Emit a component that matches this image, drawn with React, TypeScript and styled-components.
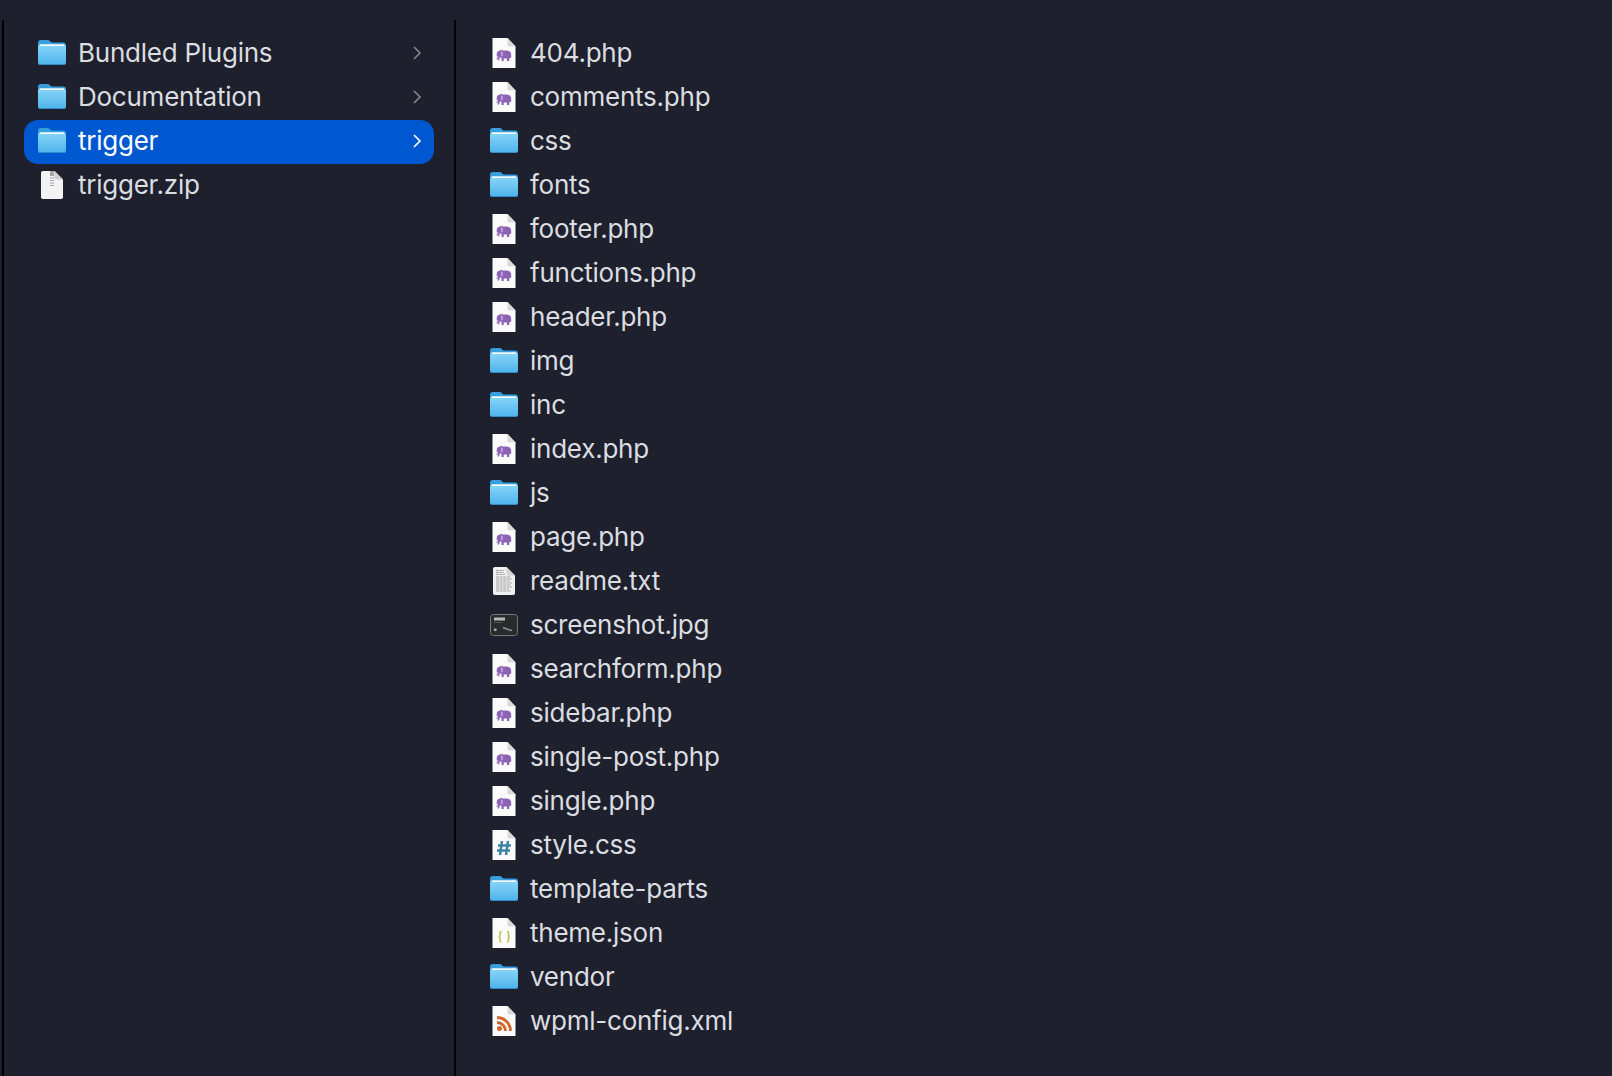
import React from "react";
import styled, { createGlobalStyle } from "styled-components";

const Global = createGlobalStyle`
  html, body { margin: 0; padding: 0; height: 100%; background: #1e212d; }
  #root { height: 100%; }
  body { font-family: Inter, "Liberation Sans", sans-serif; -webkit-font-smoothing: antialiased; }
`;

const Window = styled.div`
  height: 1076px;
  box-sizing: border-box;
  padding: 20px 0 0 2px;
  display: flex;
  background: #1e212d;
  overflow: hidden;
`;
const Sidebar = styled.nav`
  width: 450px;
  box-sizing: content-box;
  border-left: 2px solid #000;
  border-right: 2px solid #000;
  padding-top: 12px;
  display: flex;
  flex-direction: column;
`;
const Content = styled.main`
  flex: 1;
  padding: 12px 0 0 34px;
  display: flex;
  flex-direction: column;
`;
const Row = styled.div<{ $selected?: boolean }>`
  height: 44px;
  flex: none;
  display: flex;
  align-items: center;
  border-radius: 14px;
  background: ${(p) => (p.$selected ? "#0058d0" : "transparent")};
`;
const SideRow = styled(Row)`
  margin-left: 20px;
  width: 410px;
  padding-left: 14px;
  padding-right: 12px;
  box-sizing: border-box;
`;
const IconSlot = styled.span`
  width: 28px;
  height: 30px;
  flex: none;
  margin-top: -3px;
  display: flex;
  align-items: center;
  justify-content: center;
`;
const Label = styled.span<{ $selected?: boolean }>`
  margin-left: 12px;
  font-size: 26px;
  line-height: 44px;
  margin-top: -3px;
  letter-spacing: -0.24px;
  white-space: nowrap;
  color: ${(p) => (p.$selected ? "#ffffff" : "#dcdde0")};
  flex: 1;
`;
const Chevron = styled.svg`
  width: 10px;
  height: 14px;
  flex: none;
  margin-top: -3px;
`;

const Folder = () => (
  <svg width="28" height="25" viewBox="0 0 28 25">
    <defs>
      <linearGradient id="fg" x1="0" y1="0" x2="0" y2="1">
        <stop offset="0" stopColor="#86d5f8" />
        <stop offset="1" stopColor="#4fb3ea" />
      </linearGradient>
    </defs>
    <path d="M0 3C0 1 1 0 3 0H9.500C11 0 11.500 .8 12.500 1.800C13 2.300 13.500 2.500 14.500 2.500H25C27 2.500 28 3.500 28 5.500V22C28 24 27 25 25 25H3C1 25 0 24 0 22Z" fill="#389fdf" />
    <path d="M0 7C0 6 .8 5 2.500 5H25.500C27.200 5 28 6 28 7V22C28 24 27 25 25 25H3C1 25 0 24 0 22Z" fill="url(#fg)" />
    <rect x="1.500" y="4.300" width="25" height="1.700" rx=".8" fill="#f4fbff" />
    <path d="M.5 23.500C1 24.300 2 24.600 3 24.600H25C26 24.600 27 24.300 27.500 23.500" stroke="#2f8cc6" fill="none" />
  </svg>
);

const Page = ({ children }: { children?: React.ReactNode }) => (
  <svg width="24" height="30" viewBox="0 0 24 30">
    <path d="M0.500 0H15.500L23.500 8.500V30H0.500Z" fill="#fbfbfb" />
    <path d="M15.500 0V6.500C15.500 7.700 16.300 8.500 17.500 8.500H23.500Z" fill="#d9d9dc" />
    {children}
  </svg>
);

const Php = () => (
  <Page>
    <g fill="#8d63b8" transform="translate(0 -0.8)">
      <path d="M4.800 18.500C4.300 15.800 5.400 13.500 7.800 13.300C9 12.300 11 12.600 11.600 13.500C13 13 16.800 13 18.200 14.600C19.500 16 19.300 18.500 19 20.700H17.300V23.800H15V21.200H11.700V23.800H9.500V20.500C8.700 20.700 8.300 20.200 8 19.700L7.400 21.700L7 23.300H5.800L6.200 20Z" />
      <rect x="4.600" y="20" width="1" height="2" />
    </g>
    <path d="M9.700 13.700C10.200 15.400 10.200 16.900 9.700 18.200" stroke="#fbfbfb" strokeWidth=".8" fill="none" />
  </Page>
);

const Zip = () => (
  <svg width="22" height="28" viewBox="0 0 22 28">
    <path d="M2 0H13.500L22 8.500V26C22 27.300 21.300 28 20 28H2C.7 28 0 27.300 0 26V2C0 .7 .7 0 2 0Z" fill="#f3f3f4" />
    <path d="M13.500 0V6.500C13.500 7.700 14.300 8.500 15.500 8.500H22Z" fill="#cfcfd2" />
    <rect x="9" y="0" width="4" height="5" fill="#a8a8ac" />
    <path d="M9 7H13M9 9.500H13M9 12H13M9 14.500H13" stroke="#a8a8ac" strokeWidth="1.200" />
  </svg>
);

const Txt = () => (
  <svg width="22" height="28" viewBox="0 0 22 28">
    <path d="M2 0H13.500L22 8.500V26C22 27.300 21.300 28 20 28H2C.7 28 0 27.300 0 26V2C0 .7 .7 0 2 0Z" fill="#f0f0f0" />
    <path d="M13.500 0V6.500C13.500 7.700 14.300 8.500 15.500 8.500H22Z" fill="#d2d2d4" />
    <path d="M3 3.500H11M3 5.500H11M3 7.500H12M3 10H18M3 12H19M3 14H17M3 16H19M3 18H18M3 20H19M3 22H16M3 24H18" stroke="#a3a3a6" strokeWidth="1.100" strokeDasharray="3 .6" />
  </svg>
);

const Jpg = () => (
  <svg width="28" height="22" viewBox="0 0 28 22">
    <rect x=".5" y=".5" width="27" height="21" rx="3" fill="#2a2b2c" stroke="#77777a" />
    <rect x="4" y="3.500" width="11" height="3" fill="#b9b9b6" />
    <rect x="4" y="14.500" width="2.500" height="2.500" fill="#a8a8a0" />
    <path d="M13 13.500L18 15.500L22 16.500" stroke="#8f9090" strokeWidth="1.500" />
    <path d="M4 8.500H12" stroke="#555" />
  </svg>
);

const Css = () => (
  <Page>
    <path d="M10 11L8 25M16 11L14 25M6 15.500H19M5 20.500H18" stroke="#3f83a6" strokeWidth="2.500" fill="none" />
  </Page>
);

const Json = () => (
  <Page>
    <path d="M9.500 13.500C8 13.500 8 14.300 8 15.500V17.500C8 18.300 7.500 18.800 6.700 18.800C7.500 18.800 8 19.300 8 20V22C8 23.200 8 24 9.500 24M15 13.500C16.500 13.500 16.500 14.300 16.500 15.500V17.500C16.500 18.300 17 18.800 17.800 18.800C17 18.800 16.500 19.300 16.500 20V22C16.500 23.200 16.500 24 15 24" stroke="#bdc04c" strokeWidth="1.500" fill="none" />
  </Page>
);

const Rss = () => (
  <Page>
    <circle cx="7.500" cy="22.500" r="2.500" fill="#d2652b" />
    <path d="M5 16.500C9.800 16.500 13.500 20.200 13.500 25M5 11.500C12.500 11.500 18.500 17.500 18.500 25" stroke="#d2652b" strokeWidth="2.800" fill="none" />
  </Page>
);

type Kind = "folder" | "php" | "txt" | "jpg" | "css" | "json" | "rss";

const icons: Record<Kind, React.ComponentType> = {
  folder: Folder,
  php: Php,
  txt: Txt,
  jpg: Jpg,
  css: Css,
  json: Json,
  rss: Rss,
};

const files: [string, Kind][] = [
  ["404.php", "php"],
  ["comments.php", "php"],
  ["css", "folder"],
  ["fonts", "folder"],
  ["footer.php", "php"],
  ["functions.php", "php"],
  ["header.php", "php"],
  ["img", "folder"],
  ["inc", "folder"],
  ["index.php", "php"],
  ["js", "folder"],
  ["page.php", "php"],
  ["readme.txt", "txt"],
  ["screenshot.jpg", "jpg"],
  ["searchform.php", "php"],
  ["sidebar.php", "php"],
  ["single-post.php", "php"],
  ["single.php", "php"],
  ["style.css", "css"],
  ["template-parts", "folder"],
  ["theme.json", "json"],
  ["vendor", "folder"],
  ["wpml-config.xml", "rss"],
];

const sideItems = [
  { name: "Bundled Plugins", chevron: true },
  { name: "Documentation", chevron: true },
  { name: "trigger", chevron: true, selected: true },
  { name: "trigger.zip", chevron: false },
];

export default function App() {
  return (
    <Window>
      <Global />
      <Sidebar>
        {sideItems.map((it) => (
          <SideRow key={it.name} $selected={it.selected}>
            <IconSlot>{it.chevron ? <Folder /> : <Zip />}</IconSlot>
            <Label $selected={it.selected}>{it.name}</Label>
            {it.chevron && (
              <Chevron viewBox="0 0 10 14">
                <path
                  d="M2 1L8 7L2 13"
                  fill="none"
                  stroke={it.selected ? "#ffffff" : "#85868c"}
                  strokeWidth="1.600"
                />
              </Chevron>
            )}
          </SideRow>
        ))}
      </Sidebar>
      <Content>
        {files.map(([name, kind]) => {
          const Icon = icons[kind];
          return (
            <Row key={name}>
              <IconSlot>
                <Icon />
              </IconSlot>
              <Label>{name}</Label>
            </Row>
          );
        })}
      </Content>
    </Window>
  );
}
